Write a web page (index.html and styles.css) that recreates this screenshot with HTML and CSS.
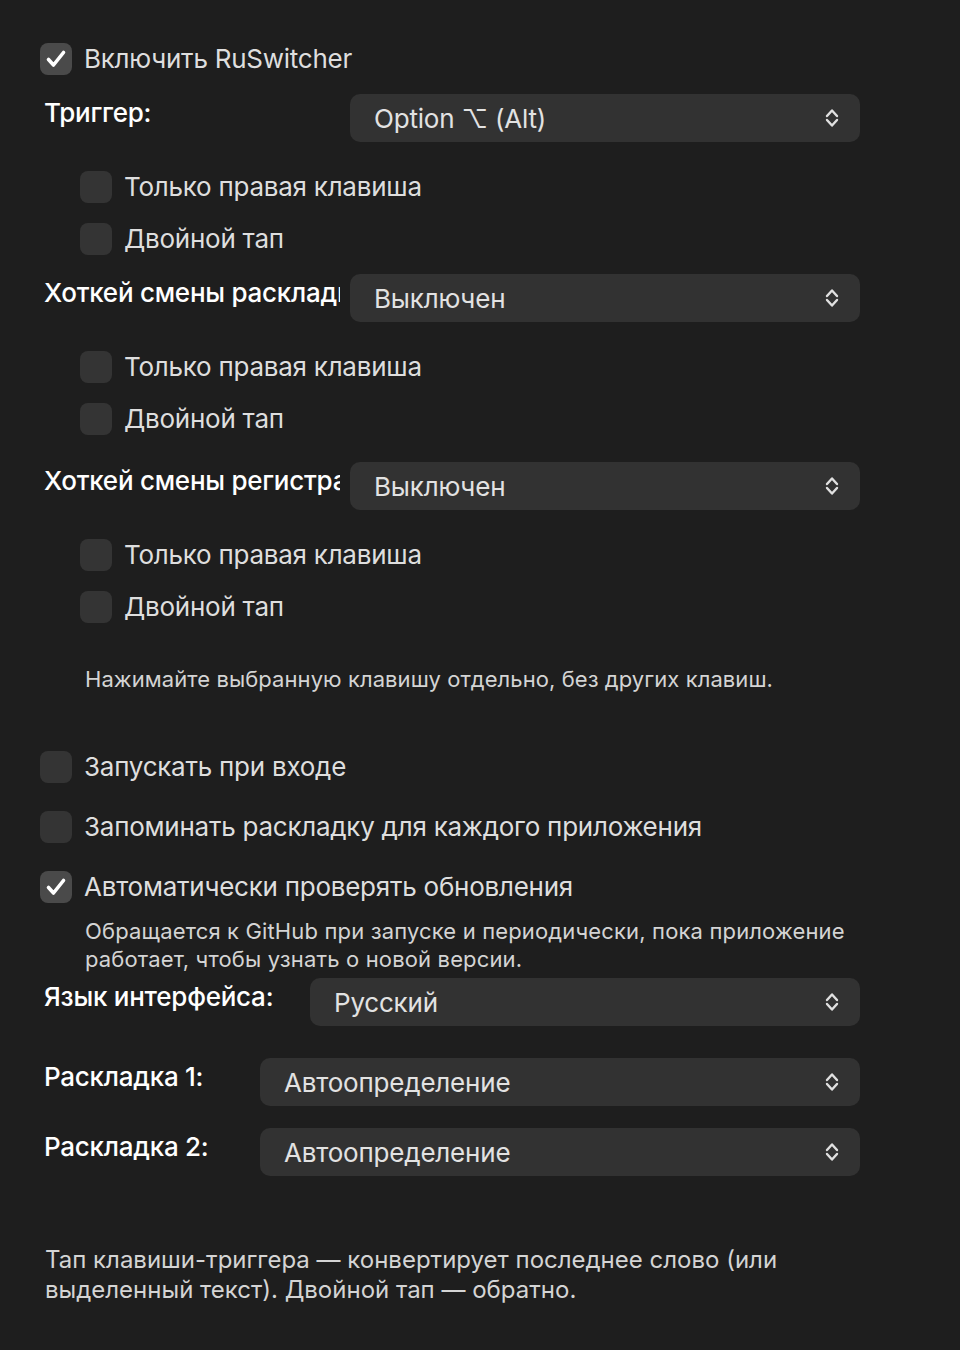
FILE: index.html
```html
<!DOCTYPE html>
<html lang="ru">
<head>
<meta charset="utf-8">
<title>RuSwitcher</title>
<link rel="stylesheet" href="styles.css">
</head>
<body>
<div class="panel">

  <label class="check-row r-enable">
    <span class="box checked"><svg viewBox="0 0 32 32"><path d="M8.5 16.5 L13.5 22 L23.5 9.5"/></svg></span>
    <span class="check-text">Включить RuSwitcher</span>
  </label>

  <div class="form-row r-trigger">
    <div class="label lw-wide">Триггер:</div>
    <div class="popup"><span class="popup-text">Option ⌥ (Alt)</span><svg class="chev" viewBox="0 0 14 24"><polyline points="2,10 7,4.5 12,10"/><polyline points="2,14 7,19.5 12,14"/></svg></div>
  </div>
  <label class="check-row sub r-sub1"><span class="box"></span><span class="check-text">Только правая клавиша</span></label>
  <label class="check-row sub r-sub2"><span class="box"></span><span class="check-text">Двойной тап</span></label>

  <div class="form-row r-layout">
    <div class="label lw-wide">Хоткей смены раскладки:</div>
    <div class="popup"><span class="popup-text">Выключен</span><svg class="chev" viewBox="0 0 14 24"><polyline points="2,10 7,4.5 12,10"/><polyline points="2,14 7,19.5 12,14"/></svg></div>
  </div>
  <label class="check-row sub r-sub1"><span class="box"></span><span class="check-text">Только правая клавиша</span></label>
  <label class="check-row sub r-sub2"><span class="box"></span><span class="check-text">Двойной тап</span></label>

  <div class="form-row r-case">
    <div class="label lw-wide">Хоткей смены регистра:</div>
    <div class="popup"><span class="popup-text">Выключен</span><svg class="chev" viewBox="0 0 14 24"><polyline points="2,10 7,4.5 12,10"/><polyline points="2,14 7,19.5 12,14"/></svg></div>
  </div>
  <label class="check-row sub r-sub1"><span class="box"></span><span class="check-text">Только правая клавиша</span></label>
  <label class="check-row sub r-sub2"><span class="box"></span><span class="check-text">Двойной тап</span></label>

  <p class="hint">Нажимайте выбранную клавишу отдельно, без других клавиш.</p>

  <label class="check-row r-login"><span class="box"></span><span class="check-text">Запускать при входе</span></label>
  <label class="check-row r-remember"><span class="box"></span><span class="check-text">Запоминать раскладку для каждого приложения</span></label>
  <label class="check-row r-updates">
    <span class="box checked"><svg viewBox="0 0 32 32"><path d="M8.5 16.5 L13.5 22 L23.5 9.5"/></svg></span>
    <span class="check-text">Автоматически проверять обновления</span>
  </label>
  <p class="desc">Обращается к GitHub при запуске и периодически, пока приложение работает, чтобы узнать о новой версии.</p>

  <div class="form-row r-lang">
    <div class="label lw-mid">Язык интерфейса:</div>
    <div class="popup"><span class="popup-text">Русский</span><svg class="chev" viewBox="0 0 14 24"><polyline points="2,10 7,4.5 12,10"/><polyline points="2,14 7,19.5 12,14"/></svg></div>
  </div>
  <div class="form-row r-kb1">
    <div class="label lw-narrow">Раскладка 1:</div>
    <div class="popup"><span class="popup-text">Автоопределение</span><svg class="chev" viewBox="0 0 14 24"><polyline points="2,10 7,4.5 12,10"/><polyline points="2,14 7,19.5 12,14"/></svg></div>
  </div>
  <div class="form-row r-kb2">
    <div class="label lw-narrow">Раскладка 2:</div>
    <div class="popup"><span class="popup-text">Автоопределение</span><svg class="chev" viewBox="0 0 14 24"><polyline points="2,10 7,4.5 12,10"/><polyline points="2,14 7,19.5 12,14"/></svg></div>
  </div>

  <p class="footer">Тап клавиши-триггера — конвертирует последнее слово (или выделенный текст). Двойной тап — обратно.</p>
</div>
</body>
</html>
```

FILE: styles.css
```css
html, body {
  margin: 0;
  padding: 0;
  background: #1e1e1e;
}
body {
  font-family: Inter, "Noto Sans", "DejaVu Sans", sans-serif;
  color: #dedede;
  -webkit-font-smoothing: antialiased;
}
.panel {
  width: 820px;
  padding: 43px 0 40px 40px;
  display: flex;
  flex-direction: column;
}
.check-row {
  display: flex;
  align-items: center;
  gap: 12px;
  height: 32px;
}
.check-row.sub {
  padding-left: 40px;
}
.box {
  width: 32px;
  height: 32px;
  border-radius: 8px;
  background: #343434;
  flex: none;
  display: flex;
  align-items: center;
  justify-content: center;
}
.box.checked {
  background: #4a4a4a;
}
.box svg {
  width: 32px;
  height: 32px;
}
.box svg path {
  fill: none;
  stroke: #ffffff;
  stroke-width: 3.6;
  stroke-linecap: round;
  stroke-linejoin: round;
}
.check-text {
  font-size: 26px;
  line-height: 32px;
  letter-spacing: -0.25px;
  color: #dedede;
  white-space: nowrap;
}
.form-row {
  display: flex;
  align-items: flex-start;
  gap: 10px;
  padding-left: 4px;
}
.label {
  font-size: 26px;
  font-weight: 500;
  line-height: 38px;
  letter-spacing: -0.25px;
  color: #ffffff;
  white-space: nowrap;
  overflow: hidden;
  flex: none;
}
.lw-wide { width: 296px; }
.lw-mid { width: 256px; }
.lw-narrow { width: 206px; }
.popup {
  flex: 1;
  height: 48px;
  border-radius: 10px;
  background: #323232;
  display: flex;
  align-items: center;
  justify-content: space-between;
  padding: 0 21px 0 24px;
  box-sizing: border-box;
}
.popup-text {
  font-size: 26px;
  letter-spacing: -0.2px;
  color: #e2e2e2;
  white-space: nowrap;
}
.chev {
  width: 14px;
  height: 24px;
  flex: none;
}
.chev polyline {
  fill: none;
  stroke: #e0e0e0;
  stroke-width: 2.4;
  stroke-linecap: round;
  stroke-linejoin: round;
}
.r-trigger { margin-top: 19px; }
.r-sub1 { margin-top: 29px; }
.r-sub2 { margin-top: 20px; }
.r-layout { margin-top: 19px; }
.r-case { margin-top: 27px; }
.hint {
  margin: 42px 0 0 45px;
  font-size: 22px;
  line-height: 28px;
  letter-spacing: 0.07px;
  color: #d4d4d4;
}
.r-login { margin-top: 58px; }
.r-remember { margin-top: 28px; }
.r-updates { margin-top: 28px; }
.desc {
  margin: 14px 0 0 45px;
  font-size: 22px;
  line-height: 28px;
  letter-spacing: 0.15px;
  color: #d4d4d4;
  max-width: 775px;
}
.r-lang { margin-top: 5px; }
.r-kb1 { margin-top: 32px; }
.r-kb2 { margin-top: 22px; }
.footer {
  margin: 69px 0 0 5px;
  font-size: 24px;
  line-height: 30px;
  color: #d4d4d4;
  max-width: 780px;
}
```
